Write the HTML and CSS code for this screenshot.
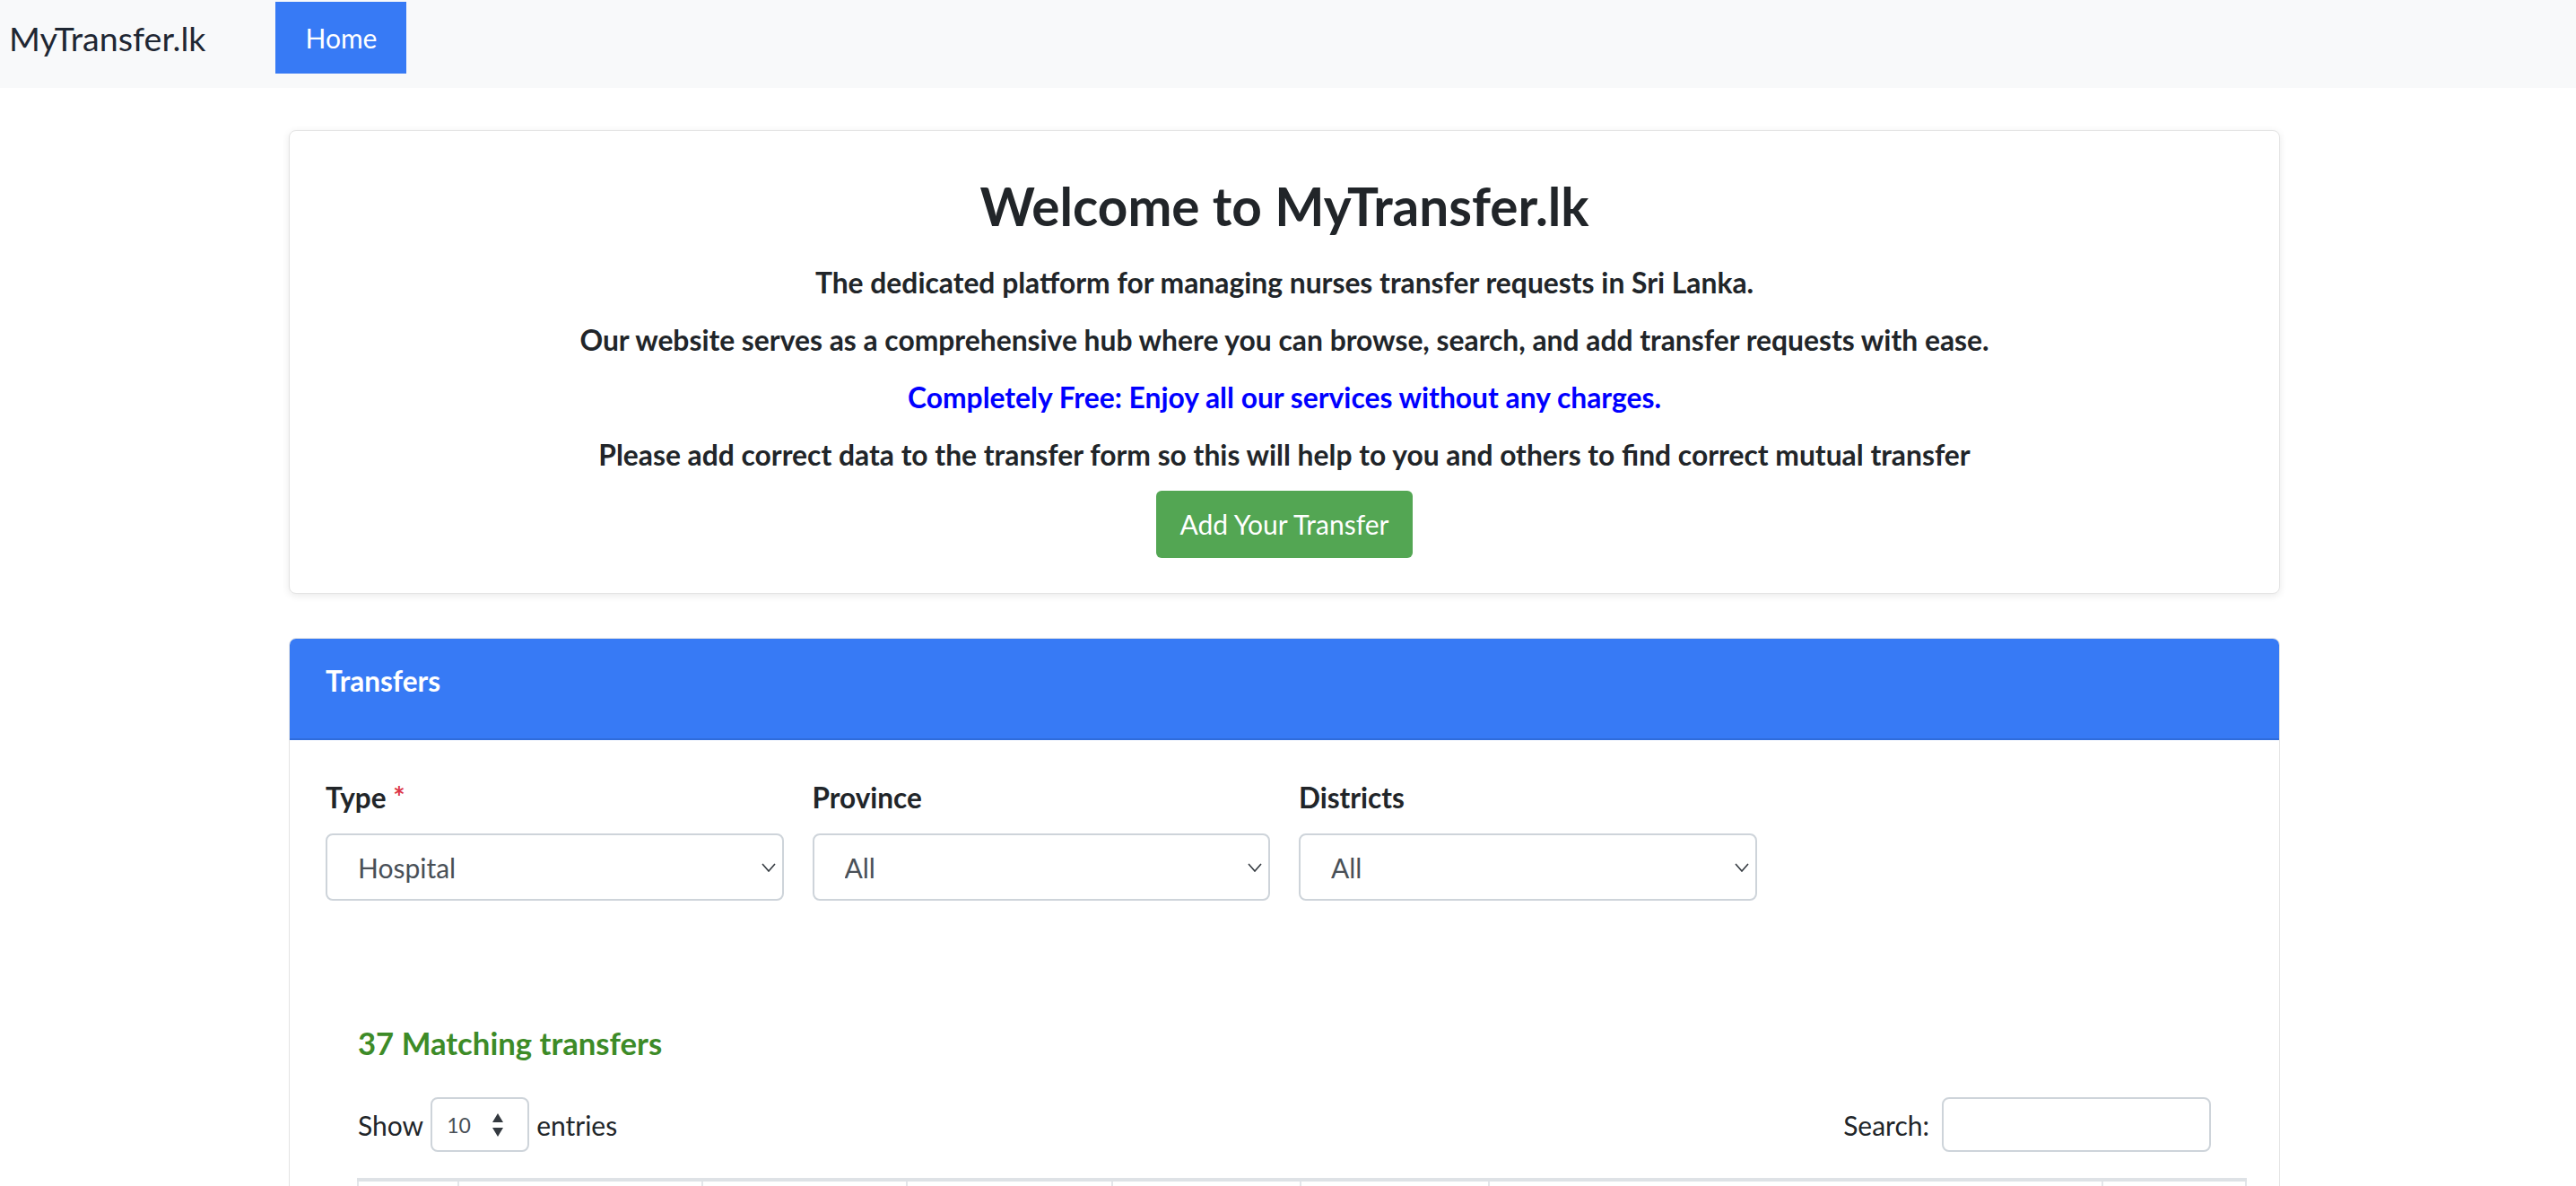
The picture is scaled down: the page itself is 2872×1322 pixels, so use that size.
FILE: index.html
```html
<!DOCTYPE html>
<html lang="en">
<head>
<meta charset="utf-8">
<title>MyTransfer.lk</title>
<link rel="stylesheet" href="styles.css">
</head>
<body>
<nav class="navbar">
  <a class="brand" href="#">MyTransfer.lk</a>
  <a class="nav-home" href="#">Home</a>
</nav>

<main class="container">
  <section class="welcome">
    <h1 class="welcome-title">Welcome to MyTransfer.lk</h1>
    <p class="lead-line">The dedicated platform for managing nurses transfer requests in Sri Lanka.</p>
    <p class="lead-line">Our website serves as a comprehensive hub where you can browse, search, and add transfer requests with ease.</p>
    <p class="lead-line free">Completely Free: Enjoy all our services without any charges.</p>
    <p class="lead-line">Please add correct data to the transfer form so this will help to you and others to find correct mutual transfer</p>
    <div class="btn-row"><a class="btn-add" href="#">Add Your Transfer</a></div>
  </section>

  <section class="transfers">
    <div class="transfers-header">
      <h6 class="transfers-title">Transfers</h6>
    </div>
    <div class="transfers-body">
      <div class="filters">
        <div class="field">
          <label class="field-label">Type <span class="req">*</span></label>
          <div class="select-wrap">
            <select class="form-select"><option>Hospital</option></select>
            <svg class="chevron" viewBox="0 0 16 10" width="16" height="10"><path d="M1 1l7 8 7-8" fill="none" stroke="#343a40" stroke-width="1.6"/></svg>
          </div>
        </div>
        <div class="field">
          <label class="field-label">Province</label>
          <div class="select-wrap">
            <select class="form-select"><option>All</option></select>
            <svg class="chevron" viewBox="0 0 16 10" width="16" height="10"><path d="M1 1l7 8 7-8" fill="none" stroke="#343a40" stroke-width="1.6"/></svg>
          </div>
        </div>
        <div class="field">
          <label class="field-label">Districts</label>
          <div class="select-wrap">
            <select class="form-select"><option>All</option></select>
            <svg class="chevron" viewBox="0 0 16 10" width="16" height="10"><path d="M1 1l7 8 7-8" fill="none" stroke="#343a40" stroke-width="1.6"/></svg>
          </div>
        </div>
      </div>

      <h5 class="matches">37 Matching transfers</h5>

      <div class="dt-top">
        <div class="dt-length">
          <span>Show</span>
          <div class="len-wrap">
            <select class="len-select"><option>10</option></select>
            <svg class="updown" viewBox="0 0 14 28" width="14" height="28"><path d="M7 1l6 10H1z M7 27l6-10H1z" fill="#343a40"/></svg>
          </div>
          <span>entries</span>
        </div>
        <div class="dt-search">
          <span>Search:</span>
          <input class="search-input" type="text">
        </div>
      </div>

      <div class="table-wrap">
        <table class="dt-table">
          <thead>
            <tr>
              <th class="w1"></th>
              <th class="w2"></th>
              <th class="w3"></th>
              <th class="w4"></th>
              <th class="w5"></th>
              <th class="w6"></th>
              <th class="w7"></th>
              <th class="w8"></th>
            </tr>
          </thead>
        </table>
      </div>
    </div>
  </section>
</main>
</body>
</html>
```

FILE: styles.css
```css
* { box-sizing: border-box; }

body {
  margin: 0;
  font-family: "Lato", "Noto Sans", sans-serif;
  color: #212529;
  background: #ffffff;
}

/* ---------- navbar ---------- */
.navbar {
  display: flex;
  align-items: flex-start;
  height: 98px;
  padding-left: 10px;
  background: #f8f9fa;
}

.brand {
  margin-top: 19px;
  font-size: 37.6px;
  line-height: 48px;
  color: #1f2733;
  text-decoration: none;
}

.nav-home {
  margin-top: 2px;
  margin-left: 78px;
  height: 80px;
  padding: 0 33px;
  line-height: 80px;
  font-size: 30px;
  color: #ffffff;
  background: #377af5;
  text-decoration: none;
}

/* ---------- container ---------- */
.container {
  width: 2228px;
  padding-right: 8px;
  margin: 47px auto 0;
}

/* ---------- welcome card ---------- */
.welcome {
  padding: 47px 40px 39px;
  text-align: center;
  background: #ffffff;
  border: 1px solid #e4e4e4;
  border-radius: 8px;
  box-shadow: 0 2px 8px rgba(0, 0, 0, 0.09);
}

.welcome-title {
  margin: 0 0 26px;
  font-size: 58.5px;
  line-height: 72px;
  font-weight: 700;
}

.lead-line {
  margin: 0 0 16px;
  font-size: 31.8px;
  line-height: 48px;
  font-weight: 700;
}

.lead-line.free {
  color: #0000ff;
}

.btn-row {
  display: flex;
  justify-content: center;
}

.btn-add {
  display: block;
  height: 75px;
  padding: 0 27px;
  line-height: 75px;
  font-size: 30px;
  color: #ffffff;
  background: #53a653;
  border-radius: 6px;
  text-decoration: none;
}

/* ---------- transfers card ---------- */
.transfers {
  margin-top: 49px;
  background: #ffffff;
  border: 1px solid #e4e4e4;
  border-radius: 8px;
  overflow: hidden;
}

.transfers-header {
  padding: 23px 40px 24px;
  background: #377af5;
  border-bottom: 2px solid #2f6cdb;
}

.transfers-title {
  margin: 0 0 16px;
  font-size: 31.5px;
  line-height: 48px;
  font-weight: 700;
  color: #ffffff;
}

.transfers-body {
  padding: 40px 40px 60px;
}

.filters {
  display: grid;
  grid-template-columns: repeat(4, 1fr);
  gap: 32px;
}

.field-label {
  display: block;
  margin-bottom: 16px;
  font-size: 31.5px;
  line-height: 48px;
  font-weight: 700;
}

.req {
  color: #dc3545;
}

.select-wrap {
  position: relative;
}

.form-select {
  display: block;
  width: 100%;
  height: 75px;
  padding: 0 60px 0 34px;
  font-family: inherit;
  font-size: 30px;
  color: #495057;
  background: #ffffff;
  border: 2px solid #ced4da;
  border-radius: 8px;
  appearance: none;
  -webkit-appearance: none;
}

.chevron {
  position: absolute;
  right: 9px;
  top: 33px;
  pointer-events: none;
}

.matches {
  margin: 135px 0 0;
  padding-left: 36px;
  font-size: 34.7px;
  line-height: 48px;
  font-weight: 700;
  color: #3d8b27;
}

.dt-top {
  display: flex;
  justify-content: space-between;
  align-items: center;
  margin-top: 36px;
  padding: 0 36px;
  font-size: 30px;
}

.dt-length,
.dt-search {
  display: flex;
  align-items: center;
}

.len-wrap {
  position: relative;
  margin: 0 8px;
}

.len-select {
  display: block;
  width: 110px;
  height: 61px;
  padding: 0 0 0 16px;
  font-family: inherit;
  font-size: 23px;
  color: #495057;
  background: #ffffff;
  border: 2px solid #ced4da;
  border-radius: 8px;
  appearance: none;
  -webkit-appearance: none;
}

.updown {
  position: absolute;
  right: 28px;
  top: 17px;
  pointer-events: none;
}

.search-input {
  width: 300px;
  height: 61px;
  margin-left: 14px;
  border: 2px solid #ced4da;
  border-radius: 8px;
  font-family: inherit;
  font-size: 30px;
}

.table-wrap {
  margin-top: 29px;
  padding-left: 35px;
}

.dt-table {
  width: 2105px;
  border-collapse: collapse;
  table-layout: fixed;
  border-top: 4px solid #dee2e6;
}

.dt-table th {
  height: 80px;
  padding: 20px 18px;
  border-left: 2px solid #e3e6ea;
}

.dt-table th:last-child { border-right: 2px solid #e3e6ea; }

.w1 { width: 112px; }
.w2 { width: 272px; }
.w3 { width: 228px; }
.w4 { width: 229px; }
.w5 { width: 210px; }
.w6 { width: 210px; }
.w7 { width: 684px; }
.w8 { width: 160px; }
```
